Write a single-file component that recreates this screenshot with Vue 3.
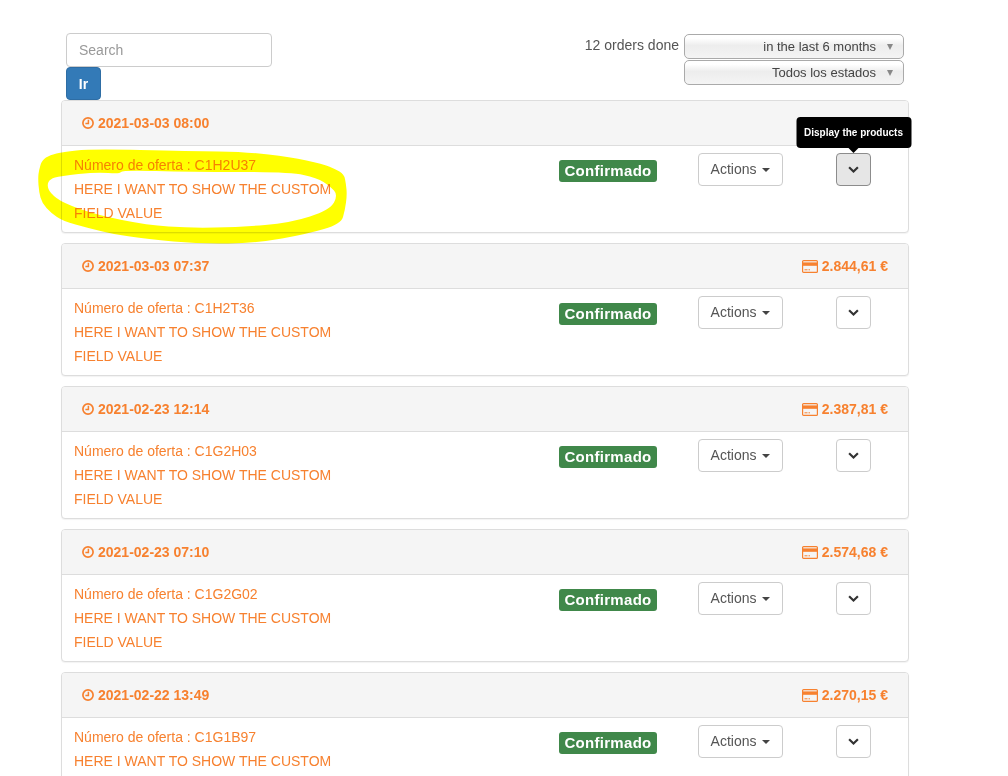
<script setup>
const orders = [
  { date: '2021-03-03 08:00', ref: 'C1H2U37', active: true },
  { date: '2021-03-03 07:37', ref: 'C1H2T36', amount: '2.844,61 €' },
  { date: '2021-02-23 12:14', ref: 'C1G2H03', amount: '2.387,81 €' },
  { date: '2021-02-23 07:10', ref: 'C1G2G02', amount: '2.574,68 €' },
  { date: '2021-02-22 13:49', ref: 'C1G1B97', amount: '2.270,15 €' },
]
const outer = [[90,149],[63,152],[50,155],[42,160],[39,170],[38,178],[39,192],[42,203],[51,213],[63,221],[88,228],[113,234],[147,239],[200,244],[257,243],[307,234],[341,224],[345,210],[347,195],[346,184],[344,174],[335,169],[323,164],[290,157],[247,152],[190,151]]
const inner = [[60,176],[97,172],[120,174],[122,170],[190,172],[290,172],[317,178],[330,186],[338,195],[330,210],[290,223],[240,227],[190,228],[147,225],[97,215],[63,203],[50,193],[47,185],[50,179]]
const smooth = (pts) => {
  const mid = (a, b) => [(a[0] + b[0]) / 2, (a[1] + b[1]) / 2]
  const start = mid(pts[pts.length - 1], pts[0])
  let d = `M${start[0]} ${start[1]}`
  pts.forEach((p, i) => {
    const m = mid(p, pts[(i + 1) % pts.length])
    d += ` Q${p[0]} ${p[1]} ${m[0]} ${m[1]}`
  })
  return d + ' Z'
}
const scribble = `${smooth(outer)} ${smooth(inner)}`
</script>

<template>
  <div class="page">
    <div class="container">
      <div class="toolbar">
        <div class="search">
          <input class="search-input" type="text" placeholder="Search" />
          <button class="go" type="button">Ir</button>
        </div>
        <div class="filters">
          <span class="count">12 orders done</span>
          <div class="selects">
            <div class="select">in the last 6 months<i class="select-arrow"></i></div>
            <div class="select">Todos los estados<i class="select-arrow"></i></div>
          </div>
        </div>
      </div>

      <div class="orders">
        <section v-for="order in orders" :key="order.ref" class="panel">
          <header class="panel-head">
            <span class="head-item">
              <svg class="clock" viewBox="0 0 12 12" width="12" height="12">
                <circle cx="6" cy="6" r="5.1" fill="none" stroke="currentColor" stroke-width="1.7" />
                <path d="M6.4 2.8V6.6H3.4" fill="none" stroke="currentColor" stroke-width="1.5" />
              </svg>
              {{ order.date }}
            </span>
            <span v-if="order.amount" class="head-item">
              <svg class="card" viewBox="0 0 16 13" width="16" height="13">
                <rect x="0.6" y="0.6" width="14.8" height="11.8" rx="1" fill="none" stroke="currentColor" stroke-width="1.2" />
                <rect x="1" y="2.4" width="14" height="3.4" fill="currentColor" />
                <path d="M2.5 9.8H5.5M6.5 9.8H8" stroke="currentColor" stroke-width="1" />
              </svg>
              {{ order.amount }}
            </span>
          </header>
          <div class="panel-body">
            <div class="info">
              <div>Número de oferta : {{ order.ref }}</div>
              <div>HERE I WANT TO SHOW THE CUSTOM FIELD VALUE</div>
            </div>
            <div><span class="badge">Confirmado</span></div>
            <div>
              <button class="btn btn-actions" type="button">Actions <i class="caret"></i></button>
            </div>
            <div>
              <button class="btn btn-toggle" :class="{ hover: order.active }" type="button">
                <svg viewBox="0 0 10 7" width="11" height="8">
                  <path d="M1 1L5 4.8L9 1" fill="none" stroke="currentColor" stroke-width="2" />
                </svg>
                <span v-if="order.active" class="tooltip">Display the products</span>
              </button>
            </div>
          </div>
        </section>
      </div>
    </div>
    <svg class="scribble" viewBox="0 0 400 260" width="400" height="260">
      <path :d="scribble" fill="#ffff00" fill-rule="evenodd" />
    </svg>
  </div>
</template>

<style>
html, body { overflow: hidden; background: #fff; }
</style>

<style scoped>
.page {
  position: relative;
  height: 776px;
  overflow: hidden;
  background: #fff;
  font-family: "Liberation Sans", Arial, sans-serif;
  font-size: 14px;
  color: #555;
}
.container {
  width: 848px;
  margin-left: 61px;
  padding-top: 33px;
}
.toolbar {
  display: flex;
  justify-content: space-between;
  padding: 0 5px;
}
.search { width: 206px; }
.search-input {
  display: block;
  box-sizing: border-box;
  width: 100%;
  height: 34px;
  padding: 6px 12px;
  border: 1px solid #ccc;
  border-radius: 4px;
  font: 14px "Liberation Sans", Arial, sans-serif;
  outline: none;
}
.search-input::placeholder { color: #999; opacity: 1; }
.go {
  display: block;
  width: 35px;
  height: 33px;
  padding: 0;
  border: 1px solid #2e6da4;
  border-radius: 4px;
  background: #337ab7;
  color: #fff;
  font: bold 14px "Liberation Sans", Arial, sans-serif;
}
.filters { display: flex; gap: 5px; }
.count { line-height: 24px; }
.selects {
  display: flex;
  flex-direction: column;
  gap: 1px;
  width: 220px;
  padding-top: 1px;
}
.select {
  box-sizing: border-box;
  height: 25px;
  padding-right: 27px;
  border: 1px solid #aaa;
  border-radius: 5px;
  background: linear-gradient(#fff 15%, #ededed 45%, #f4f4f4 100%);
  position: relative;
  text-align: right;
  font-size: 13px;
  line-height: 23px;
  color: #444;
}
.select-arrow {
  position: absolute;
  right: 10px;
  top: 9px;
  border-left: 3.5px solid transparent;
  border-right: 3.5px solid transparent;
  border-top: 6px solid #888;
}
.orders {
  display: flex;
  flex-direction: column;
  gap: 10px;
}
.panel {
  flex: none;
  border: 1px solid #ddd;
  border-radius: 4px;
  box-shadow: 0 1px 1px rgba(0, 0, 0, .05);
  background: #fff;
}
.panel-head {
  display: flex;
  justify-content: space-between;
  align-items: center;
  box-sizing: border-box;
  height: 45px;
  padding: 0 20px;
  border-bottom: 1px solid #ddd;
  border-radius: 3px 3px 0 0;
  background: #f5f5f5;
  color: #f7812f;
  font-weight: bold;
}
.head-item { display: flex; align-items: center; gap: 4px; }
.panel-body {
  display: grid;
  grid-template-columns: 485px 139px 138px 1fr;
  box-sizing: border-box;
  height: 86px;
  padding: 7px 12px 0;
  line-height: 24px;
  color: #f7812f;
}
.info { width: 275px; }
.badge {
  display: inline-block;
  box-sizing: border-box;
  width: 98px;
  height: 22px;
  margin-top: 7px;
  border-radius: 3px;
  background: #40884a;
  color: #fff;
  font-weight: bold;
  font-size: 15px;
  line-height: 21px;
  letter-spacing: .3px;
  text-align: center;
}
.btn {
  position: relative;
  box-sizing: border-box;
  display: block;
  height: 33px;
  padding: 0 0 2px;
  border: 1px solid #ccc;
  border-radius: 4px;
  background: #fff;
  color: #555;
  font: 14px "Liberation Sans", Arial, sans-serif;
}
.btn-actions { width: 85px; }
.caret {
  display: inline-block;
  margin-left: 2px;
  vertical-align: middle;
  border-left: 4px solid transparent;
  border-right: 4px solid transparent;
  border-top: 4px solid #444;
}
.btn-toggle {
  width: 35px;
  padding: 0;
  color: #333;
}
.btn-toggle svg { display: block; margin: 0 auto; }
.btn-toggle.hover {
  background: #e6e6e6;
  border-color: #8c8c8c;
}
.tooltip {
  position: absolute;
  left: 50%;
  top: -37px;
  width: 115px;
  height: 31px;
  transform: translateX(-50%);
  border-radius: 4px;
  background: #000;
  color: #fff;
  font-size: 10px;
  font-weight: bold;
  line-height: 31px;
  text-align: center;
  white-space: nowrap;
}
.tooltip::after {
  content: "";
  position: absolute;
  left: 50%;
  top: 100%;
  margin-left: -5px;
  border-left: 5px solid transparent;
  border-right: 5px solid transparent;
  border-top: 5px solid #000;
}
.scribble {
  position: absolute;
  left: 0;
  top: 0;
  mix-blend-mode: multiply;
  pointer-events: none;
}
</style>
